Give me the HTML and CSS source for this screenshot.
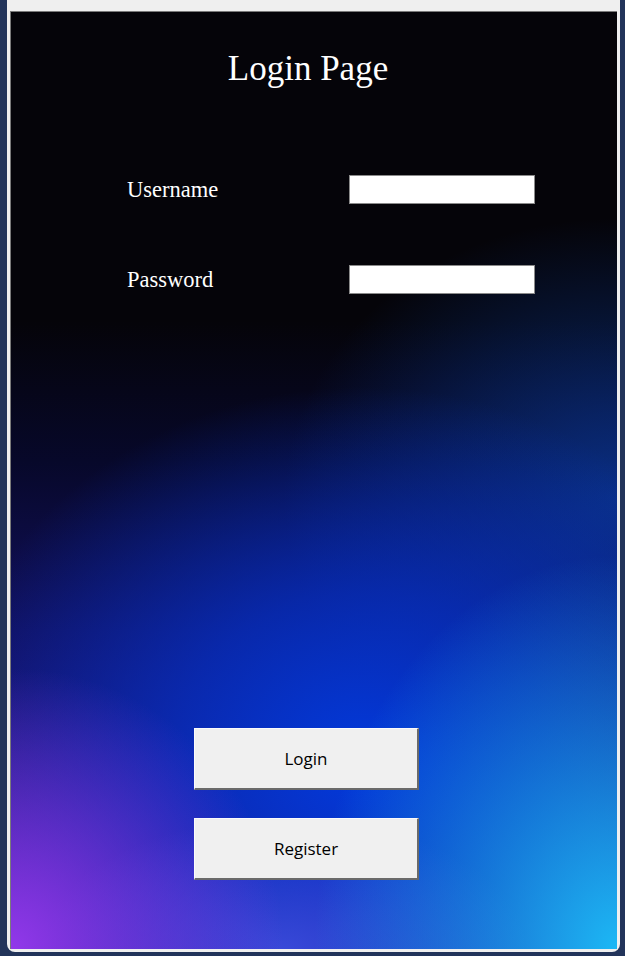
FILE: index.html
```html
<!DOCTYPE html>
<html lang="en">
<head>
    <meta charset="UTF-8">
    <meta name="viewport" content="width=device-width, initial-scale=1.0">
    <title>Login Page</title>
    <link rel="stylesheet" href="styles.css">
</head>
<body>
    <div class="window">
        <div class="login-container">
            <h2>Login Page</h2>
            <form id="loginForm" class="login-form">
                <label for="username">Username</label>
                <input type="text" id="username" name="username">
                <label for="password">Password</label>
                <input type="password" id="password" name="password">
            </form>
            <div class="button-group">
                <button type="submit" form="loginForm" class="app-button">Login</button>
                <button type="button" class="app-button">Register</button>
            </div>
        </div>
    </div>
</body>
</html>
```

FILE: styles.css
```css
body {
    margin: 0;
    background-color: #22345a;
    height: 956px;
    overflow: hidden;
}
.window {
    margin-left: 7px;
    width: 613px;
    height: 952px;
    box-sizing: border-box;
    padding: 11px 3px 3px 3px;
    background-color: #efefef;
    border-radius: 0 0 8px 8px;
}
.login-container {
    height: 938px;
    box-sizing: border-box;
    border-top: 1px solid #7a7a7a;
    border-left: 1px solid #7a7a7a;
    display: flex;
    flex-direction: column;
    background:
        radial-gradient(ellipse 45% 30% at 0% 100%, rgba(146, 56, 234, 1), rgba(146, 56, 234, 0)),
        radial-gradient(ellipse 50% 42% at 100% 100%, rgba(28, 184, 245, 1), rgba(28, 184, 245, 0)),
        radial-gradient(ellipse 40% 14% at 45% 100%, rgba(60, 76, 220, 0.9), rgba(60, 76, 220, 0)),
        radial-gradient(ellipse 70% 40% at 58% 80%, rgba(2, 58, 220, 1) 0%, rgba(5, 48, 196, 0.75) 45%, rgba(5, 30, 150, 0) 100%),
        radial-gradient(ellipse 55% 30% at 100% 52%, rgba(10, 60, 160, 0.75), rgba(10, 60, 160, 0)),
        linear-gradient(to bottom, #050409 0%, #050409 33%, #07082a 48%, #12105e 66%, #2c1a9a 100%);
}
.login-container h2 {
    margin: 0;
    padding-top: 37px;
    padding-right: 12px;
    text-align: center;
    font-family: "Liberation Serif", "Times New Roman", serif;
    font-weight: normal;
    font-size: 35px;
    line-height: 40px;
    color: #ffffff;
}
.login-form {
    display: grid;
    grid-template-columns: 222px 186px;
    row-gap: 61px;
    align-items: center;
    margin: 86px 0 0 116px;
}
.login-form label {
    font-family: "Liberation Serif", "Times New Roman", serif;
    font-size: 22.5px;
    line-height: 29px;
    color: #ffffff;
}
.login-form input {
    height: 29px;
    box-sizing: border-box;
    border: 1px solid #8a8a8a;
    background-color: #ffffff;
    padding: 0 4px;
    outline: none;
}
.button-group {
    margin-top: auto;
    margin-left: 183px;
    padding-bottom: 69px;
    display: flex;
    flex-direction: column;
    gap: 28px;
}
.app-button {
    width: 225px;
    height: 62px;
    box-sizing: border-box;
    background-color: #f0f0f0;
    border: none;
    border-top: 1px solid #fbfbfb;
    border-left: 1px solid #fbfbfb;
    border-right: 2px solid #6a6a6a;
    border-bottom: 2px solid #6a6a6a;
    font-family: "Open Sans", "Noto Sans", sans-serif;
    font-size: 17px;
    color: #000000;
    cursor: pointer;
}
```
